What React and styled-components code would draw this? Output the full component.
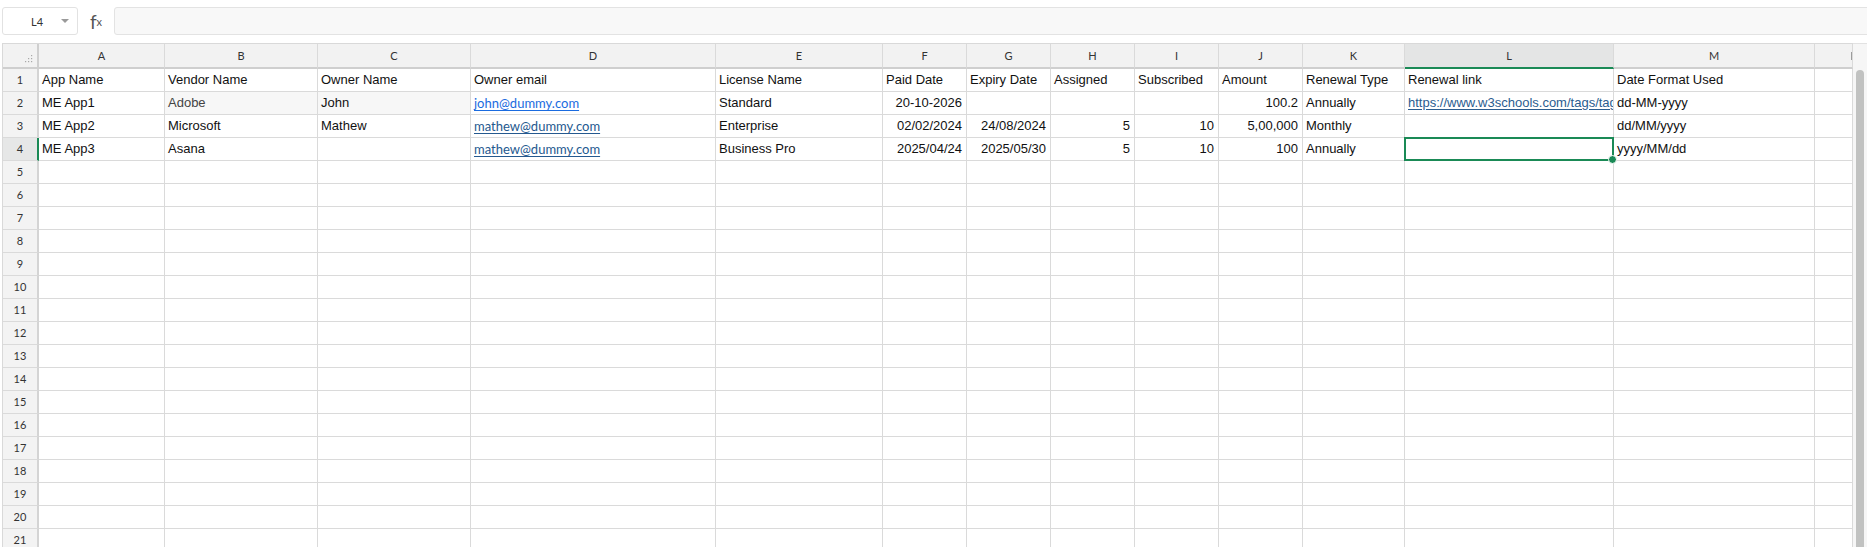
import React from 'react'
import styled, { createGlobalStyle, css } from 'styled-components'

const GlobalStyle = createGlobalStyle`
  html, body {
    margin: 0;
    padding: 0;
    background: #ffffff;
    overflow: hidden;
    font-family: "Liberation Sans", Arial, sans-serif;
  }
`

const Page = styled.div`
  width: 1867px;
  height: 547px;
  overflow: hidden;
  display: flex;
  flex-direction: column;
`

const Toolbar = styled.div`
  height: 43px;
  box-sizing: border-box;
  padding: 7px 0 0 2px;
  display: flex;
  align-items: flex-start;
`

const NameBox = styled.div`
  width: 76px;
  height: 28px;
  box-sizing: border-box;
  border: 1px solid #e2e2e2;
  border-radius: 3px;
  background: #fff;
  display: flex;
  align-items: center;
  font-family: Lato, "Liberation Sans", sans-serif;
  font-size: 11px;
  color: #333;

  span {
    flex: 1;
    text-align: center;
    padding-left: 10px;
  }
`

const Caret = styled.i`
  width: 0;
  height: 0;
  margin-right: 8px;
  border-left: 4px solid transparent;
  border-right: 4px solid transparent;
  border-top: 4px solid #9a9a9a;
`

const FxLabel = styled.div`
  width: 36px;
  height: 28px;
  display: flex;
  align-items: center;
  justify-content: center;
  font-family: Lato, "Liberation Sans", sans-serif;
  font-size: 19px;
  color: #555;
  line-height: 1;

  sub {
    font-size: 11px;
    vertical-align: -4px;
  }
`

const FormulaInput = styled.div`
  flex: 1;
  height: 28px;
  box-sizing: border-box;
  margin-right: -4px;
  border: 1px solid #e3e3e3;
  border-radius: 3px;
  background: #f8f8f8;
`

const SheetArea = styled.div`
  flex: 1;
  display: flex;
  padding-left: 2px;
  min-height: 0;
`

const Grid = styled.div`
  display: grid;
  grid-template-columns: 36px 126px 153px 153px 245px 167px 84px 84px 84px 84px 84px 102px 209px 201px 38px;
  grid-template-rows: 25px;
  grid-auto-rows: 23px;
  border-top: 1px solid #d9d9d9;
  border-left: 1px solid #d9d9d9;
  align-content: start;
`

const cellBase = css`
  box-sizing: border-box;
  border-right: 1px solid #dadada;
  border-bottom: 1px solid #dadada;
  overflow: hidden;
  white-space: nowrap;
`

const CornerCell = styled.div`
  ${cellBase};
  background: #f2f2f2;
  border-bottom: 2px solid #cfcfcf;
  border-right: 2px solid #cfcfcf;
  display: flex;
  align-items: flex-end;
  justify-content: flex-end;
  padding: 0 4px 4px 0;
`

const ColHeader = styled.div`
  ${cellBase};
  position: relative;
  background: ${p => (p.$active ? '#e4e5e5' : '#f2f2f2')};
  border-bottom: 2px solid ${p => (p.$active ? '#1a8a56' : '#cfcfcf')};
  font-family: Lato, "Liberation Sans", sans-serif;
  font-size: 11px;
  color: #333;
  text-align: center;
  line-height: 23px;

  ${p => p.$grip && css`
    &::after {
      content: '';
      position: absolute;
      right: 0;
      top: 8px;
      width: 1px;
      height: 8px;
      background: #9c9c9c;
    }
  `}
`

const RowHeader = styled.div`
  ${cellBase};
  background: ${p => (p.$active ? '#e6e7e7' : '#f3f3f3')};
  border-right: 2px solid ${p => (p.$active ? '#1a8a56' : '#d4d4d4')};
  font-family: Lato, "Liberation Sans", sans-serif;
  font-size: 11px;
  color: #333;
  text-align: center;
  line-height: 22px;
`

const Cell = styled.div`
  ${cellBase};
  position: relative;
  padding: 0 4px 0 3px;
  font-size: 13px;
  line-height: 22px;
  color: ${p => (p.$muted ? '#444' : '#111')};
  text-align: ${p => (p.$right ? 'right' : 'left')};
  background: ${p => (p.$shade ? '#f7f7f7' : '#fff')};
  overflow: ${p => (p.$selected ? 'visible' : 'hidden')};
`

const MailLink = styled.span`
  font-family: Lato, "Liberation Sans", sans-serif;
  color: ${p => (p.$bright ? '#1a6be0' : '#25598f')};
  text-decoration: underline;
  text-underline-offset: 2px;
`

const WebLink = styled.span`
  color: #2b5d8f;
  text-decoration: underline;
  text-underline-offset: 2px;
`

const SelectionBox = styled.div`
  position: absolute;
  left: -1px;
  top: -1px;
  right: -1px;
  bottom: -1px;
  border: 2px solid #1a8a56;
  pointer-events: none;
  z-index: 2;

  &::after {
    content: '';
    position: absolute;
    right: -5px;
    bottom: -5px;
    width: 7px;
    height: 7px;
    border-radius: 50%;
    background: #1a8a56;
    border: 1px solid #fff;
  }
`

const Scrollbar = styled.div`
  flex: 1;
  border-top: 1px solid #e2e2e2;
  background: #f6f6f6;
  padding: 26px 0 0 3px;
  display: flex;
`

const Thumb = styled.div`
  width: 8px;
  background: #c1c2c1;
  border-radius: 4px 4px 0 0;
`

const columns = ['A', 'B', 'C', 'D', 'E', 'F', 'G', 'H', 'I', 'J', 'K', 'L', 'M', '']

const mail = (text, bright) => ({ text, mail: true, bright })
const num = text => ({ text, right: true })

const rows = [
  ['App Name', 'Vendor Name', 'Owner Name', 'Owner email', 'License Name', 'Paid Date', 'Expiry Date', 'Assigned', 'Subscribed', 'Amount', 'Renewal Type', 'Renewal link', 'Date Format Used', ''],
  ['ME App1', { text: 'Adobe', shade: true, muted: true }, { text: 'John', shade: true }, mail('john@dummy.com', true), 'Standard', num('20-10-2026'), '', '', '', num('100.2'), 'Annually', { text: 'https://www.w3schools.com/tags/tag_a.asp', link: true }, 'dd-MM-yyyy', ''],
  ['ME App2', 'Microsoft', 'Mathew', mail('mathew@dummy.com'), 'Enterprise', num('02/02/2024'), num('24/08/2024'), num('5'), num('10'), num('5,00,000'), 'Monthly', '', 'dd/MM/yyyy', ''],
  ['ME App3', 'Asana', '', mail('mathew@dummy.com'), 'Business Pro', num('2025/04/24'), num('2025/05/30'), num('5'), num('10'), num('100'), 'Annually', { text: '', selected: true }, 'yyyy/MM/dd', ''],
]

while (rows.length < 21) rows.push(columns.map(() => ''))

const GripDots = () => (
  <svg width="8" height="8" viewBox="0 0 8 8">
    {[[6, 0], [6, 3], [3, 3], [6, 6], [3, 6], [0, 6]].map(([x, y], i) => (
      <rect key={i} x={x} y={y} width="1.2" height="1.2" fill="#a8a8a8" />
    ))}
  </svg>
)

function renderCell(value, r, c) {
  const v = typeof value === 'string' ? { text: value } : value
  let content = v.text
  if (v.mail) content = <MailLink $bright={v.bright}>{v.text}</MailLink>
  if (v.link) content = <WebLink>{v.text}</WebLink>
  return (
    <Cell key={`${r}-${c}`} $right={v.right} $shade={v.shade} $muted={v.muted} $selected={v.selected}>
      {content}
      {v.selected && <SelectionBox />}
    </Cell>
  )
}

export default function App() {
  return (
    <Page>
      <GlobalStyle />
      <Toolbar>
        <NameBox>
          <span>L4</span>
          <Caret />
        </NameBox>
        <FxLabel>
          f<sub>x</sub>
        </FxLabel>
        <FormulaInput />
      </Toolbar>
      <SheetArea>
        <Grid>
          <CornerCell>
            <GripDots />
          </CornerCell>
          {columns.map((col, i) => (
            <ColHeader key={i} $active={col === 'L'} $grip={col === ''}>
              {col}
            </ColHeader>
          ))}
          {rows.map((row, r) => (
            <React.Fragment key={r}>
              <RowHeader $active={r === 3}>{r + 1}</RowHeader>
              {row.map((value, c) => renderCell(value, r, c))}
            </React.Fragment>
          ))}
        </Grid>
        <Scrollbar>
          <Thumb />
        </Scrollbar>
      </SheetArea>
    </Page>
  )
}
